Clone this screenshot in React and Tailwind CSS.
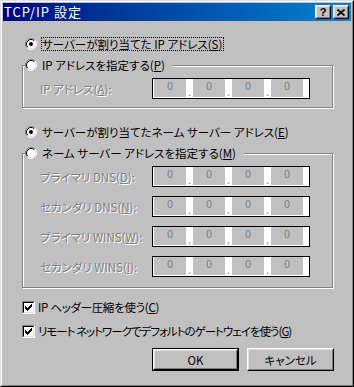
import React from "react";

const jp = "font-['Noto_Sans_CJK_JP',sans-serif] [font-feature-settings:'palt']";
const disabled = "text-[#808080] [text-shadow:1px_1px_0_#fff]";

const Radio = ({ checked }) => (
  <svg width="12" height="12" viewBox="0 0 12 12" className="shrink-0">
    <circle cx="6" cy="6" r="5" fill="#fff" />
    <path d="M9.89 2.11A5.5 5.5 0 0 0 2.11 9.89" stroke="#808080" fill="none" />
    <path d="M2.11 9.89A5.5 5.5 0 0 0 9.89 2.11" stroke="#fff" fill="none" />
    <path d="M9.18 2.82A4.5 4.5 0 0 0 2.82 9.18" stroke="#000" fill="none" />
    <path d="M2.82 9.18A4.5 4.5 0 0 0 9.18 2.82" stroke="#dfdfdf" fill="none" />
    {checked && <circle cx="6" cy="6" r="2" fill="#000" />}
  </svg>
);

const Checkbox = () => (
  <span className="flex h-[13px] w-[13px] shrink-0 border border-t-[#808080] border-l-[#808080] border-b-white border-r-white">
    <span className="flex flex-1 items-center justify-center border border-t-black border-l-black border-b-[#dfdfdf] border-r-[#dfdfdf] bg-white">
      <svg width="7" height="7" viewBox="0 0 7 7" shapeRendering="crispEdges">
        <rect x="6" y="0" width="1" height="1" />
        <rect x="5" y="1" width="2" height="1" />
        <rect x="0" y="2" width="1" height="1" />
        <rect x="4" y="2" width="3" height="1" />
        <rect x="0" y="3" width="2" height="1" />
        <rect x="3" y="3" width="3" height="1" />
        <rect x="0" y="4" width="5" height="1" />
        <rect x="1" y="5" width="3" height="1" />
        <rect x="2" y="6" width="1" height="1" />
      </svg>
    </span>
  </span>
);

// disabled IP address control: 4 grey octets on white
const IpField = () => (
  <div className="flex h-[21px] w-[158px] shrink-0 border border-black bg-white pl-[1px]">
    {[0, 1, 2, 3].map((i) => (
      <React.Fragment key={i}>
        {i > 0 && (
          <span className="flex w-[7px] items-end justify-center pb-[1px] text-[11px] leading-none text-[#808080]">
            .
          </span>
        )}
        <span className="mb-[1px] flex w-[32px] justify-center bg-[#c0c0c0] text-[11px] leading-[13px] text-[#808080]">
          0
        </span>
      </React.Fragment>
    ))}
  </div>
);

const FieldRow = ({ label }) => (
  <div className="flex items-center">
    <span className={`w-[112px] shrink-0 whitespace-nowrap ${disabled}`}>{label}</span>
    <IpField />
  </div>
);

const GroupBox = ({ title, pb, children }) => (
  <fieldset className="ml-[19px] w-[311px] border border-[#808080] shadow-[inset_1px_1px_0_#fff,1px_1px_0_#fff]">
    <legend className="ml-[2px] bg-[#c0c0c0] pr-[8px]">
      <span className="flex h-[16px] items-center gap-[5px] whitespace-nowrap">
        <Radio />
        <span>{title}</span>
      </span>
    </legend>
    <div className={`flex flex-col gap-[9px] pl-[17px] pt-[5px] ${pb}`}>{children}</div>
  </fieldset>
);

const CaptionButton = ({ children }) => (
  <span className="flex h-[14px] w-[16px] border border-t-white border-l-white border-b-black border-r-black">
    <span className="flex flex-1 items-center justify-center border border-t-[#dfdfdf] border-l-[#dfdfdf] border-b-[#808080] border-r-[#808080] bg-[#c0c0c0]">
      {children}
    </span>
  </span>
);

export default function App() {
  return (
    <div className={`h-[387px] w-[354px] border border-t-[#dfdfdf] border-l-[#dfdfdf] border-b-black border-r-black text-[11.5px] leading-[16px] text-black ${jp}`}>
      <div className="flex h-full flex-col border border-t-white border-l-white border-b-[#808080] border-r-[#808080] bg-[#c0c0c0] p-[1px]">
        {/* title bar */}
        <div className="flex h-[18px] shrink-0 items-center bg-linear-to-r from-[#000080] to-[#1084d0] pl-[1px] pr-[2px]">
          <span className="flex-1 text-[13px] tracking-[1px] text-white">TCP/IP 設定</span>
          <div className="flex gap-[2px]">
            <CaptionButton>
              <span className="font-['Liberation_Sans',sans-serif] text-[11px] font-bold leading-none">?</span>
            </CaptionButton>
            <CaptionButton>
              <svg width="8" height="7" viewBox="0 0 8 7">
                <path d="M0.5 0.5L7.5 6.5M7.5 0.5L0.5 6.5" stroke="#000" strokeWidth="1.6" />
              </svg>
            </CaptionButton>
          </div>
        </div>

        <div className="flex flex-1 flex-col pt-[15px]">
          <div className="ml-[22px] flex h-[16px] items-center gap-[4px]">
            <Radio checked />
            <span className="whitespace-nowrap border border-dotted border-black pr-[1px] leading-[12px]">
              サーバーが割り当てた IP アドレス(<u>S</u>)
            </span>
          </div>

          <div className="mt-[5px]">
            <GroupBox title={<>IP アドレスを指定する(<u>P</u>)</>} pb="pb-[8px]">
              <FieldRow label={<>IP アドレス(<u>A</u>):</>} />
            </GroupBox>
          </div>

          <div className="ml-[22px] mt-[16px] flex h-[16px] items-center gap-[5px] whitespace-nowrap">
            <Radio checked />
            <span>サーバーが割り当てたネーム サーバー アドレス(<u>E</u>)</span>
          </div>

          <div className="mt-[5px]">
            <GroupBox title={<>ネーム サーバー アドレスを指定する(<u>M</u>)</>} pb="pb-[10px]">
              <FieldRow label={<>プライマリ DNS(<u>D</u>):</>} />
              <FieldRow label={<>セカンダリ DNS(<u>N</u>):</>} />
              <FieldRow label={<>プライマリ WINS(<u>W</u>):</>} />
              <FieldRow label={<>セカンダリ WINS(<u>I</u>):</>} />
            </GroupBox>
          </div>

          <div className="ml-[19px] mt-[11px] flex h-[16px] items-center gap-[3px] whitespace-nowrap">
            <Checkbox />
            <span className="tracking-[-0.3px]">IP ヘッダー圧縮を使う(<u>C</u>)</span>
          </div>
          <div className="ml-[19px] mt-[8px] flex h-[16px] items-center gap-[3px] whitespace-nowrap">
            <Checkbox />
            <span className="tracking-[-1px]">リモート ネットワークでデフォルトのゲートウェイを使う(<u>G</u>)</span>
          </div>

          <div className="mt-[9px] flex justify-end gap-[8px] pr-[17px]">
            <button className="h-[23px] w-[87px] border border-black bg-[#c0c0c0] p-0">
              <span className="flex h-full w-full border border-t-white border-l-white border-b-black border-r-black">
                <span className="flex flex-1 items-center justify-center border border-t-[#dfdfdf] border-l-[#dfdfdf] border-b-[#808080] border-r-[#808080]">
                  OK
                </span>
              </span>
            </button>
            <button className="h-[23px] w-[87px] border border-t-white border-l-white border-b-black border-r-black bg-[#c0c0c0] p-0">
              <span className="flex h-full w-full items-center justify-center border border-t-[#dfdfdf] border-l-[#dfdfdf] border-b-[#808080] border-r-[#808080]">
                キャンセル
              </span>
            </button>
          </div>
        </div>
      </div>
    </div>
  );
}
